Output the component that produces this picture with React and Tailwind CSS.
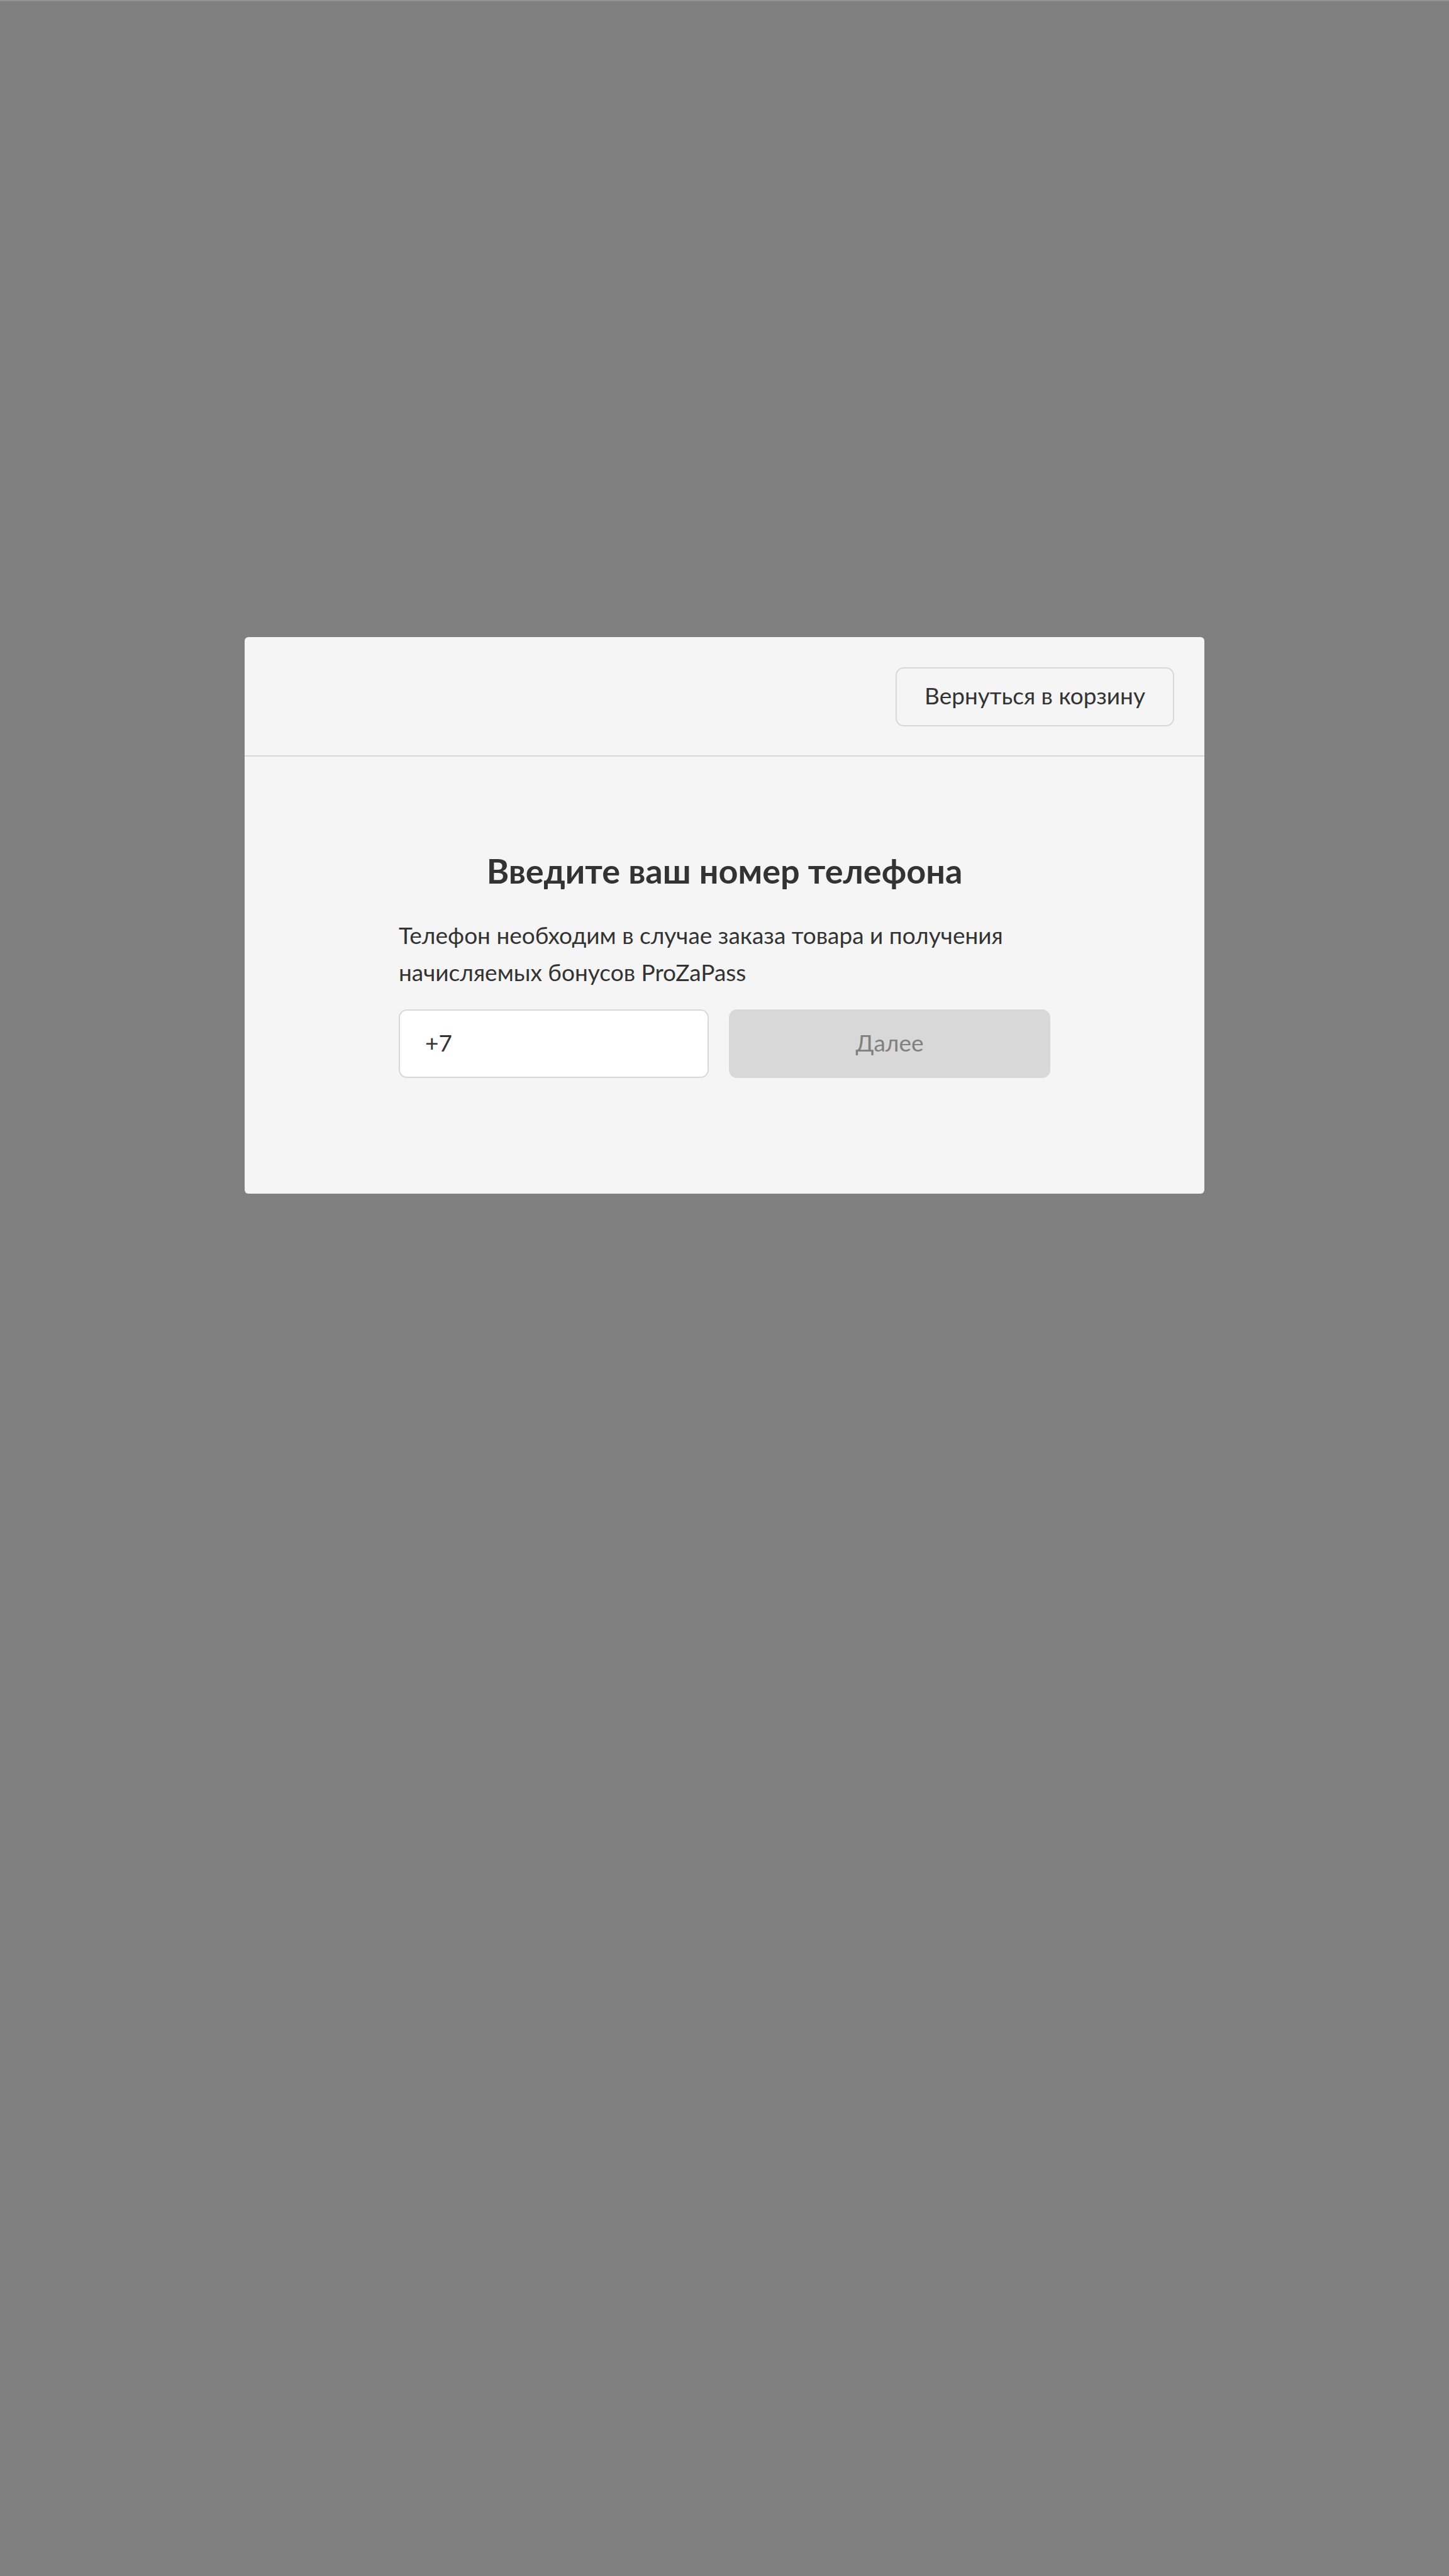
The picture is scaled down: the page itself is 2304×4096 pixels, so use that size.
import { useState } from "react";

export default function App() {
  const [phone, setPhone] = useState("+7");

  return (
    <div className="min-h-screen border-t-2 border-[#949494] bg-[#808080] px-8 pt-[1011px] font-['Lato','Noto_Sans',sans-serif] text-[37px] text-[#333333]">
      <main
        role="dialog"
        aria-labelledby="phone-title"
        className="mx-auto w-full max-w-[1526px] rounded-[6px] bg-[#f5f5f5]"
      >
        <header className="flex justify-end border-b-2 border-[#d8d8d8] px-12 pt-12 pb-[46px]">
          <button
            type="button"
            className="h-[94px] w-[443px] rounded-[13px] border-2 border-[#d8d8d8] pb-1"
          >
            Вернуться в корзину
          </button>
        </header>
        <form
          className="mx-auto w-full max-w-[1036px] pt-[142px] pb-[184px]"
          onSubmit={(e) => e.preventDefault()}
        >
          <h1 id="phone-title" className="text-center text-[54px] leading-[80px] font-bold">
            Введите ваш номер телефона
          </h1>
          <p className="mt-8 leading-[59px]">
            Телефон необходим в случае заказа товара и получения начисляемых бонусов ProZaPass
          </p>
          <div className="mt-[30px] flex gap-8">
            <input
              type="tel"
              aria-label="Номер телефона"
              value={phone}
              onChange={(e) => setPhone(e.target.value)}
              className="h-[109px] w-[493px] rounded-[13px] border-2 border-[#d8d8d8] bg-white px-10 pb-1 outline-none"
            />
            <button
              type="submit"
              disabled
              className="h-[109px] flex-1 rounded-[13px] bg-[#d8d8d8] pb-1 text-[#808080]"
            >
              Далее
            </button>
          </div>
        </form>
      </main>
    </div>
  );
}
